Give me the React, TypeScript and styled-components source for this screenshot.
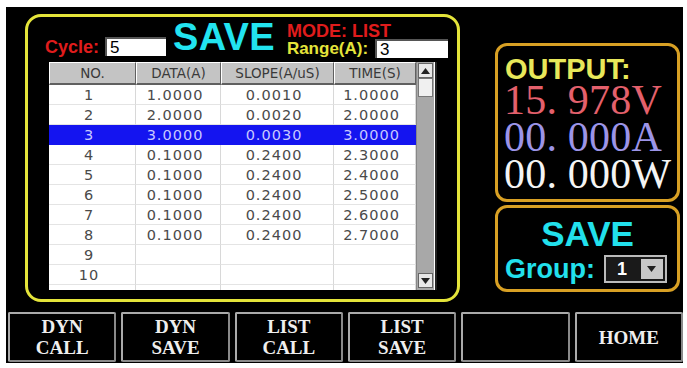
import styled, { createGlobalStyle } from "styled-components";

const Global = createGlobalStyle`
  html, body { margin: 0; padding: 0; background: #fff; }
  body { width: 687px; height: 368px; overflow: hidden; }
`;

const Page = styled.div`
  width: 687px;
  height: 368px;
  padding: 7px 4px 0 6px;
  box-sizing: border-box;
`;

const Screen = styled.div`
  width: 677px;
  height: 356px;
  background: #000;
  display: flex;
  flex-direction: column;
  font-family: "Liberation Sans", Arial, sans-serif;
`;

const Top = styled.div`
  display: flex;
  height: 298px;
  padding: 7px 0 0 19px;
  box-sizing: border-box;
  gap: 35px;
`;

const MainPanel = styled.div`
  width: 435px;
  height: 288px;
  box-sizing: border-box;
  border: 3px solid #e4e43a;
  border-radius: 16px;
  padding: 0 0 0 21px;
  display: flex;
  flex-direction: column;
`;

const Header = styled.div`
  height: 45px;
  display: flex;
  align-items: flex-end;
  padding-bottom: 2px;
  box-sizing: border-box;
`;

const Label = styled.span<{ $color: string; $size?: number }>`
  color: ${(p) => p.$color};
  font-weight: bold;
  font-size: ${(p) => p.$size ?? 17}px;
  line-height: 1;
`;

const Field = styled.div<{ $w: number }>`
  width: ${(p) => p.$w}px;
  height: 19px;
  background: #fff;
  border-top: 2px solid #555;
  border-left: 2px solid #555;
  box-sizing: border-box;
  color: #000;
  font-size: 17px;
  line-height: 17px;
  padding-left: 3px;
`;

const CycleGroup = styled.div`
  display: flex;
  align-items: center;
  gap: 6px;
  margin-left: -4px;
  margin-bottom: 4px;
`;

const BigSave = styled.span`
  color: #22e4f0;
  font-weight: bold;
  font-size: 38px;
  line-height: 34px;
  margin-left: 7px;
  margin-bottom: 6px;
  letter-spacing: 0.3px;
`;

const ModeBlock = styled.div`
  display: flex;
  flex-direction: column;
  margin-left: 12px;
  margin-bottom: 2px;
`;

const ModeText = styled.span`
  color: #e01c1c;
  font-weight: bold;
  font-size: 18px;
  line-height: 16px;
`;

const RangeRow = styled.div`
  display: flex;
  align-items: center;
  gap: 7px;
`;

const TableWrap = styled.div`
  display: flex;
  width: 386px;
  height: 228px;
  background: #fff;
  border-right: 2px solid #222;
  overflow: hidden;
`;

const Grid = styled.div`
  display: grid;
  grid-template-columns: 87px 85px 113px 82px;
  grid-auto-rows: 20px;
  grid-template-rows: 23px;
  align-content: start;
  width: 367px;
`;

const HeadCell = styled.div`
  background: #c4c4c4;
  border-top: 1px solid #fff;
  border-left: 1px solid #fff;
  border-right: 1px solid #606060;
  border-bottom: 2px solid #606060;
  display: flex;
  align-items: center;
  justify-content: center;
  font-family: "DejaVu Sans", Verdana, sans-serif;
  font-size: 13.5px;
  color: #3a3a3a;
`;

const Cell = styled.div<{ $sel?: boolean }>`
  background: ${(p) => (p.$sel ? "#1414f0" : "#fff")};
  color: ${(p) => (p.$sel ? "#c8c8ff" : "#4a4a4a")};
  border-right: 1px solid ${(p) => (p.$sel ? "#1414f0" : "#d8d8d8")};
  border-bottom: 1px solid ${(p) => (p.$sel ? "#1414f0" : "#e4e4e4")};
  display: flex;
  align-items: center;
  justify-content: center;
  padding-right: 6px;
  font-family: "DejaVu Sans", Verdana, sans-serif;
  font-size: 14.5px;
  letter-spacing: 1px;
`;

const ScrollBar = styled.div`
  width: 17px;
  background: #a8a8a8;
  display: flex;
  flex-direction: column;
  justify-content: space-between;
  border-left: 1px solid #888;
`;

const ScrollBtn = styled.div<{ $bottom?: boolean }>`
  width: 15px;
  height: 15px;
  margin: ${(p) => (p.$bottom ? "0 0 2px 1px" : "1px 0 0 1px")};
  background: #e8e8e8;
  border: 1px solid #666;
  box-sizing: border-box;
  display: flex;
  align-items: center;
  justify-content: center;
`;

const Thumb = styled.div`
  width: 15px;
  height: 19px;
  margin-left: 1px;
  background: #f0f0f0;
  border: 1px solid #777;
  box-sizing: border-box;
`;

const RightCol = styled.div`
  width: 185px;
  padding-top: 29px;
  display: flex;
  flex-direction: column;
  gap: 3px;
`;

const OrangeBox = styled.div<{ $h: number }>`
  height: ${(p) => p.$h}px;
  box-sizing: border-box;
  border: 3px solid #d8a024;
  border-radius: 12px;
  display: flex;
  flex-direction: column;
`;

const OutputTitle = styled.div`
  color: #e8e85a;
  font-weight: bold;
  font-size: 29px;
  line-height: 26px;
  padding: 10px 0 0 7px;
`;

const Reading = styled.div<{ $color: string }>`
  color: ${(p) => p.$color};
  font-family: "Liberation Serif", "Times New Roman", serif;
  font-size: 42px;
  line-height: 37px;
  height: 37px;
  padding-left: 6px;
  white-space: pre;
  letter-spacing: 0.2px;
`;

const SaveTitle = styled.div`
  color: #22e0ec;
  font-weight: bold;
  font-size: 35px;
  line-height: 34px;
  text-align: center;
  padding-top: 9px;
`;

const GroupRow = styled.div`
  display: flex;
  align-items: center;
  padding: 3px 0 0 7px;
  gap: 9px;
`;

const GroupLabel = styled.span`
  color: #22e0ec;
  font-weight: bold;
  font-size: 27px;
  line-height: 30px;
`;

const Select = styled.div`
  width: 63px;
  height: 28px;
  background: #1a1a1a;
  border: 2px solid #bbb;
  box-sizing: border-box;
  display: flex;
  align-items: center;
  justify-content: space-between;
  padding: 0 2px 0 11px;
  color: #fff;
  font-weight: bold;
  font-size: 18px;
`;

const SelectArrow = styled.div`
  width: 22px;
  height: 20px;
  background: #c8c8c8;
  display: flex;
  align-items: center;
  justify-content: center;
`;

const ButtonRow = styled.div`
  display: flex;
  gap: 5px;
  padding: 7px 0 0 2px;
  height: 50px;
`;

const SoftKey = styled.div`
  flex: 1;
  height: 50px;
  box-sizing: border-box;
  border: 2px solid #8a8a8a;
  border-top-color: #aaa;
  border-left-color: #aaa;
  border-radius: 2px;
  display: flex;
  flex-direction: column;
  align-items: center;
  justify-content: center;
  color: #eee;
  font-family: "Liberation Serif", "Times New Roman", serif;
  font-weight: bold;
  font-size: 19px;
  line-height: 21px;
`;

const Arrow = ({ down }: { down?: boolean }) => (
  <svg width="9" height="6" viewBox="0 0 9 6">
    <polygon points={down ? "0,0 9,0 4.5,6" : "0,6 9,6 4.5,0"} fill="#222" />
  </svg>
);

const rows: [string, string, string, string][] = [
  ["1", "1.0000", "0.0010", "1.0000"],
  ["2", "2.0000", "0.0020", "2.0000"],
  ["3", "3.0000", "0.0030", "3.0000"],
  ["4", "0.1000", "0.2400", "2.3000"],
  ["5", "0.1000", "0.2400", "2.4000"],
  ["6", "0.1000", "0.2400", "2.5000"],
  ["7", "0.1000", "0.2400", "2.6000"],
  ["8", "0.1000", "0.2400", "2.7000"],
  ["9", "", "", ""],
  ["10", "", "", ""],
  ["", "", "", ""],
];

const keys = [["DYN", "CALL"], ["DYN", "SAVE"], ["LIST", "CALL"], ["LIST", "SAVE"], [], ["HOME"]];

export default function App() {
  return (
    <Page>
      <Global />
      <Screen>
        <Top>
          <MainPanel>
            <Header>
              <CycleGroup>
                <Label $color="#e01c1c" $size={18}>Cycle:</Label>
                <Field $w={61}>5</Field>
              </CycleGroup>
              <BigSave>SAVE</BigSave>
              <ModeBlock>
                <ModeText>MODE: LIST</ModeText>
                <RangeRow>
                  <Label $color="#e4e43a">Range(A):</Label>
                  <Field $w={73}>3</Field>
                </RangeRow>
              </ModeBlock>
            </Header>
            <TableWrap>
              <Grid>
                {["NO.", "DATA(A)", "SLOPE(A/uS)", "TIME(S)"].map((h) => (
                  <HeadCell key={h}>{h}</HeadCell>
                ))}
                {rows.map((r, i) =>
                  r.map((c, j) => (
                    <Cell key={`${i}-${j}`} $sel={i === 2}>
                      {c}
                    </Cell>
                  ))
                )}
              </Grid>
              <ScrollBar>
                <div>
                  <ScrollBtn>
                    <Arrow />
                  </ScrollBtn>
                  <Thumb />
                </div>
                <ScrollBtn $bottom>
                  <Arrow down />
                </ScrollBtn>
              </ScrollBar>
            </TableWrap>
          </MainPanel>
          <RightCol>
            <OrangeBox $h={159}>
              <OutputTitle>OUTPUT:</OutputTitle>
              <Reading $color="#e4606c">15. 978V</Reading>
              <Reading $color="#9c94e8">00. 000A</Reading>
              <Reading $color="#f4f4f4">00. 000W</Reading>
            </OrangeBox>
            <OrangeBox $h={87}>
              <SaveTitle>SAVE</SaveTitle>
              <GroupRow>
                <GroupLabel>Group:</GroupLabel>
                <Select>
                  1
                  <SelectArrow>
                    <Arrow down />
                  </SelectArrow>
                </Select>
              </GroupRow>
            </OrangeBox>
          </RightCol>
        </Top>
        <ButtonRow>
          {keys.map((k, i) => (
            <SoftKey key={i}>
              {k.map((t) => (
                <span key={t}>{t}</span>
              ))}
            </SoftKey>
          ))}
        </ButtonRow>
      </Screen>
    </Page>
  );
}
